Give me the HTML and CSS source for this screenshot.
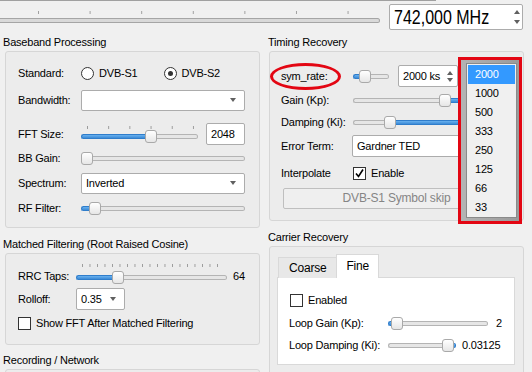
FILE: index.html
```html
<!DOCTYPE html>
<html lang="en">
<head>
  <meta charset="UTF-8">
  <meta name="viewport" content="width=device-width, initial-scale=1.0">
  <title>DVB-S2 Receiver</title>
  <link rel="stylesheet" href="styles.css">
</head>
<body>

  <div class="window">

    <!-- Frequency bar -->
    <div class="topline"></div>
    <div class="toprow">
      <div class="freq-slider">
        <div class="freq-ticks"></div>
        <div class="freq-groove"></div>
      </div>
      <div class="spinbox freq">
        <span class="spin-text"><span class="freq-text">742,000 MHz</span></span>
        <span class="spin-arrows"><span class="up"></span><span class="down"></span></span>
      </div>
    </div>

    <div class="columns">

      <!-- Left column -->
      <div class="col col-left">
        <div class="group-title">Baseband Processing</div>
        <div class="group baseband">
          <div class="row r-standard">
            <span class="label">Standard:</span>
            <span class="option"><span class="radio"></span>DVB-S1</span>
            <span class="option"><span class="radio checked"></span>DVB-S2</span>
          </div>
          <div class="row r-bandwidth">
            <span class="label">Bandwidth:</span>
            <div class="combo wide"><span class="combo-text"></span><span class="arrow"></span></div>
          </div>
          <div class="row r-fft">
            <span class="label">FFT Size:</span>
            <div class="tick-slider fft">
              <div class="ticks ticks-fft"></div>
              <div class="slider">
                <span class="groove fill first" style="width: 64px"></span>
                <span class="handle"></span>
                <span class="groove last"></span>
              </div>
            </div>
            <div class="lineedit">2048</div>
          </div>
          <div class="row r-bbgain">
            <span class="label">BB Gain:</span>
            <div class="slider full">
              <span class="handle"></span>
              <span class="groove last"></span>
            </div>
          </div>
          <div class="row r-spectrum">
            <span class="label">Spectrum:</span>
            <div class="combo wide"><span class="combo-text">Inverted</span><span class="arrow"></span></div>
          </div>
          <div class="row r-rf">
            <span class="label">RF Filter:</span>
            <div class="slider full">
              <span class="groove fill first" style="width: 8px"></span>
              <span class="handle"></span>
              <span class="groove last"></span>
            </div>
          </div>
        </div>

        <div class="group-title">Matched Filtering (Root Raised Cosine)</div>
        <div class="group matched">
          <div class="row r-rrc">
            <span class="label short">RRC Taps:</span>
            <div class="tick-slider rrc">
              <div class="ticks ticks-rrc"></div>
              <div class="slider">
                <span class="groove fill first" style="width: 36px"></span>
                <span class="handle"></span>
                <span class="groove last"></span>
              </div>
            </div>
            <span class="value">64</span>
          </div>
          <div class="row r-rolloff">
            <span class="label short">Rolloff:</span>
            <div class="combo small"><span class="combo-text">0.35</span><span class="arrow"></span></div>
          </div>
          <div class="row r-showfft">
            <span class="check"></span>
            <span class="check-text">Show FFT After Matched Filtering</span>
          </div>
        </div>

        <div class="group-title last-title">Recording / Network</div>
        <div class="group recording"></div>
      </div>

      <!-- Right column -->
      <div class="col col-right">
        <div class="group-title">Timing Recovery</div>
        <div class="group timing">
          <div class="row r-sym">
            <span class="label">sym_rate:</span>
            <div class="slider sym">
              <span class="groove fill first" style="width: 6px"></span>
              <span class="handle"></span>
              <span class="groove last"></span>
            </div>
            <div class="spinbox symbox">
              <span class="spin-text">2000 ks</span>
              <span class="spin-arrows"><span class="up"></span><span class="down"></span></span>
            </div>
          </div>
          <div class="row r-gain">
            <span class="label">Gain (Kp):</span>
            <div class="slider loop">
              <span class="groove first" style="width: 86px"></span>
              <span class="handle"></span>
              <span class="groove fill last"></span>
            </div>
          </div>
          <div class="row r-damping">
            <span class="label">Damping (Ki):</span>
            <div class="slider loop">
              <span class="groove first" style="width: 31px"></span>
              <span class="handle"></span>
              <span class="groove fill last"></span>
            </div>
          </div>
          <div class="row r-error">
            <span class="label">Error Term:</span>
            <div class="combo error"><span class="combo-text">Gardner TED</span><span class="arrow"></span></div>
          </div>
          <div class="row r-interp">
            <span class="label">Interpolate</span>
            <span class="check checked">
              <svg width="11" height="11" viewBox="0 0 11 11"><polyline points="2,5.5 4.5,8.5 9,1.5" fill="none" stroke="#000" stroke-width="1.6"/></svg>
            </span>
            <span class="check-text">Enable</span>
          </div>
          <div class="button">DVB-S1 Symbol skip</div>
        </div>

        <div class="group-title">Carrier Recovery</div>
        <div class="group carrier">
          <div class="tabbar">
            <span class="tab">Coarse</span>
            <span class="tab active">Fine</span>
          </div>
          <div class="tabpanel">
            <div class="row r-enabled">
              <span class="check"></span>
              <span class="check-text">Enabled</span>
            </div>
            <div class="row r-loopgain">
              <span class="label loop-label">Loop Gain (Kp):</span>
              <div class="slider lg">
                <span class="groove fill first" style="width: 3px"></span>
                <span class="handle"></span>
                <span class="groove last"></span>
              </div>
              <span class="value">2</span>
            </div>
            <div class="row r-loopdamp">
              <span class="label loop-label">Loop Damping (Ki):</span>
              <div class="slider ld">
                <span class="groove first" style="width: 54px"></span>
                <span class="handle"></span>
                <span class="groove fill last tiny"></span>
              </div>
              <span class="value">0.03125</span>
            </div>
          </div>
        </div>
      </div>

    </div>

    <!-- Annotations over the window -->
    <div class="sym-mark"></div>
    <div class="popup-mark">
      <div class="popup-list">
        <div class="popup-item current">2000</div>
        <div class="popup-item">1000</div>
        <div class="popup-item">500</div>
        <div class="popup-item">333</div>
        <div class="popup-item">250</div>
        <div class="popup-item">125</div>
        <div class="popup-item">66</div>
        <div class="popup-item">33</div>
      </div>
    </div>

  </div>

</body>
</html>
```
FILE: styles.css
```css
/* Reset */
* {
  margin: 0;
  padding: 0;
  box-sizing: border-box;
}

html, body {
  width: 532px;
  height: 372px;
  overflow: hidden;
}

body {
  background: #f0f0f0;
  font-family: "Liberation Sans", Arial, sans-serif;
  font-size: 11px;
  letter-spacing: -0.2px;
  color: #000;
}

.window {
  position: relative;
  width: 532px;
  height: 372px;
  overflow: hidden;
}

/* Top frequency bar */
.topline {
  width: 436px;
  height: 1px;
  background: #a0a0a0;
}

.toprow {
  display: flex;
  height: 30px;
  margin-top: 3px;
}

.freq-slider {
  width: 389px;
}

.freq-ticks {
  width: 380px;
  height: 3px;
  margin-top: 7px;
  background-image: linear-gradient(to right, #a0a0a0 1px, transparent 1px);
  background-size: 51.6px 3px;
  background-position: 38px 0;
  background-repeat: repeat-x;
}

.freq-groove {
  width: 380px;
  height: 5px;
  margin-top: 4px;
  border: 1px solid #a5a5a5;
  border-left: none;
  border-radius: 0 3px 3px 0;
  background: #d9d9d9;
}

.spinbox {
  display: flex;
  align-items: center;
  background: #fff;
  border: 1px solid #acacac;
  border-radius: 2px;
}

.spin-text {
  flex: 1;
  white-space: nowrap;
}

.spin-arrows {
  display: flex;
  flex-direction: column;
  align-items: center;
  gap: 4px;
  width: 12px;
}

.spin-arrows .up {
  width: 0;
  height: 0;
  border-left: 3.5px solid transparent;
  border-right: 3.5px solid transparent;
  border-bottom: 4px solid #606060;
}

.spin-arrows .down {
  width: 0;
  height: 0;
  border-left: 3.5px solid transparent;
  border-right: 3.5px solid transparent;
  border-top: 4px solid #606060;
}

.freq {
  width: 134px;
  height: 26px;
  padding-left: 4px;
  font-size: 20px;
  letter-spacing: 0;
}

.freq-text {
  display: inline-block;
  transform: scaleX(0.8);
  transform-origin: left center;
}

.freq .spin-arrows {
  margin-right: 1px;
  gap: 6px;
}

/* Columns and groups */
.columns {
  display: grid;
  grid-template-columns: 266px 266px;
}

.col-left {
  padding-left: 3px;
}

.col-right {
  padding-left: 2px;
}

.group-title {
  height: 17px;
  line-height: 17px;
  white-space: nowrap;
}

.group + .group-title {
  margin-top: 8px;
}

.group + .last-title {
  margin-top: 7px;
}

.group {
  width: 255px;
  margin-left: 2px;
  border: 1px solid #d6d6d6;
  border-radius: 3px;
  background: #ececec;
}

.col-right .group {
  margin-left: 1px;
}

.row {
  display: flex;
  align-items: center;
  white-space: nowrap;
}

.label {
  flex: none;
  width: 63px;
}

.label.short {
  width: 58px;
}

/* Radio, check */
.option {
  display: flex;
  align-items: center;
  width: 85px;
}

.radio {
  width: 13px;
  height: 13px;
  margin-right: 5px;
  border: 1px solid #333;
  border-radius: 50%;
  background: #fff;
  display: flex;
  align-items: center;
  justify-content: center;
}

.radio.checked::after {
  content: "";
  width: 5px;
  height: 5px;
  border-radius: 50%;
  background: #333;
}

.check {
  flex: none;
  width: 13px;
  height: 13px;
  border: 1px solid #333;
  background: #fff;
  display: flex;
  align-items: center;
  justify-content: center;
}

.check-text {
  margin-left: 5px;
}

/* Combo boxes and edits */
.combo {
  display: flex;
  align-items: center;
  height: 21px;
  padding-left: 4px;
  background: #fff;
  border: 1px solid #acacac;
  border-radius: 2px;
}

.combo-text {
  flex: 1;
}

.combo .arrow {
  width: 0;
  height: 0;
  margin-right: 8px;
  border-left: 3.5px solid transparent;
  border-right: 3.5px solid transparent;
  border-top: 4px solid #606060;
}

.combo.wide {
  width: 164px;
}

.combo.small {
  width: 49px;
  height: 22px;
}

.combo.error {
  width: 158px;
  height: 22px;
}

.lineedit {
  width: 39px;
  height: 22px;
  margin-left: 8px;
  padding-left: 4px;
  line-height: 20px;
  background: #fff;
  border: 1px solid #acacac;
  border-radius: 2px;
}

/* Sliders */
.slider {
  display: flex;
  align-items: center;
  height: 13px;
}

.slider.full {
  width: 164px;
}

.groove {
  flex: none;
  height: 5px;
  border: 1px solid #b4b4b4;
  background: #e6e6e6;
}

.groove.last {
  flex: 1;
}

.groove.fill {
  border-color: #2f7dcb;
  background: linear-gradient(#69b1ef, #3b8ad6);
}

.groove.first {
  border-right: none;
  border-radius: 3px 0 0 3px;
}

.groove.last {
  border-left: none;
  border-radius: 0 3px 3px 0;
}

.groove.tiny {
  flex: none;
  width: 2px;
}

.handle {
  flex: none;
  width: 12px;
  height: 13px;
  border: 1px solid #a9a9a9;
  border-radius: 3px;
  background: linear-gradient(#ffffff, #e6e6e6);
}

.tick-slider {
  display: flex;
  flex-direction: column;
}

.ticks {
  height: 3px;
  background-image: linear-gradient(to right, #9a9a9a 1px, transparent 1px);
  background-repeat: repeat-x;
}

.tick-slider.fft {
  width: 117px;
  margin-top: 1px;
}

.ticks-fft {
  background-size: 21.2px 3px;
  background-position: 6px 0;
  width: 113px;
  margin-bottom: 1px;
}

.tick-slider.rrc {
  width: 151px;
  margin-top: -5px;
}

.ticks-rrc {
  background-size: 7.5px 3px;
  background-position: 6px 0;
  width: 146px;
  margin-bottom: 4px;
}

.value {
  margin-left: 6px;
}

/* Baseband rows */
.baseband {
  height: 177px;
  padding: 0 13px 0 12px;
}

.r-standard { height: 22px; margin-top: 10px; }
.r-bandwidth { height: 22px; margin-top: 5px; }
.r-fft { height: 24px; margin-top: 11px; }
.r-bbgain { height: 22px; margin-top: 1px; }
.r-spectrum { height: 22px; margin-top: 3px; }
.r-rf { height: 22px; margin-top: 3px; }

/* Matched filtering rows */
.matched {
  height: 92px;
  padding-left: 12px;
}

.r-rrc { height: 24px; margin-top: 10px; }
.r-rolloff { height: 22px; }
.r-showfft { height: 20px; margin-top: 3px; }

.recording {
  height: 40px;
}

/* Timing recovery rows */
.timing {
  height: 170px;
  padding: 0 12px 0 11px;
}

.timing .label {
  width: 72px;
}

.r-sym { height: 22px; margin-top: 13px; }
.r-gain { height: 20px; margin-top: 3px; }
.r-damping { height: 20px; margin-top: 2px; }
.r-error { height: 22px; margin-top: 3px; }
.r-interp { height: 20px; margin-top: 6px; }

.slider.sym {
  width: 36px;
}

.slider.loop {
  width: 110px;
}

.symbox {
  width: 60px;
  height: 22px;
  margin-left: 9px;
  padding-left: 4px;
}

.symbox .spin-arrows {
  gap: 3px;
  margin-right: 1px;
}

.r-error .combo {
  margin-left: -1px;
}

.button {
  width: 227px;
  height: 21px;
  margin: 5px 0 0 2px;
  line-height: 19px;
  text-align: center;
  color: #858585;
  font-size: 12px;
  background: #efefef;
  border: 1px solid #bfbfbf;
  border-radius: 2px;
}

/* Carrier recovery tabs */
.carrier {
  height: 140px;
}

.tabbar {
  display: flex;
  align-items: flex-end;
  height: 24px;
  margin: 7px 0 0 8px;
}

.tab {
  height: 21px;
  padding: 0 10px;
  line-height: 20px;
  font-size: 12px;
  border: 1px solid #d9d9d9;
  border-bottom: none;
  background: #e8e8e8;
}

.tab.active {
  position: relative;
  height: 24px;
  margin-left: -1px;
  padding: 0 9px;
  line-height: 22px;
  background: #fff;
}

.tabpanel {
  width: 238px;
  height: 88px;
  margin: -1px 0 0 7px;
  padding: 12px 0 0 11px;
  background: #fff;
  border: 1px solid #d9d9d9;
}

.r-enabled { height: 20px; padding-left: 1px; }
.r-loopgain { height: 20px; margin-top: 3px; }
.r-loopdamp { height: 20px; margin-top: 2px; }

.loop-label {
  width: 99px;
}

.slider.lg {
  width: 100px;
}

.slider.lg + .value {
  margin-left: 8px;
}

.slider.ld {
  width: 68px;
}

/* Annotations */
.sym-mark {
  position: absolute;
  left: 270px;
  top: 63px;
  width: 71px;
  height: 27px;
  border: 3px solid #e30613;
  border-radius: 50%;
}

.popup-mark {
  position: absolute;
  left: 458px;
  top: 57px;
  width: 64px;
  height: 167px;
  padding: 3px 2px 3px 5px;
  border: 3px solid #e30613;
  background: linear-gradient(to right, #b4b4b4, #9a9a9a);
}

.popup-list {
  width: 51px;
  height: 155px;
  padding-top: 1px;
  background: #f0f0f0;
  border: 1px solid #8a8a8a;
}

.popup-item {
  height: 19px;
  line-height: 19px;
  padding-left: 7px;
  margin: 0 1px;
}

.popup-item.current {
  background: #3399ff;
  color: #fff;
}
```
